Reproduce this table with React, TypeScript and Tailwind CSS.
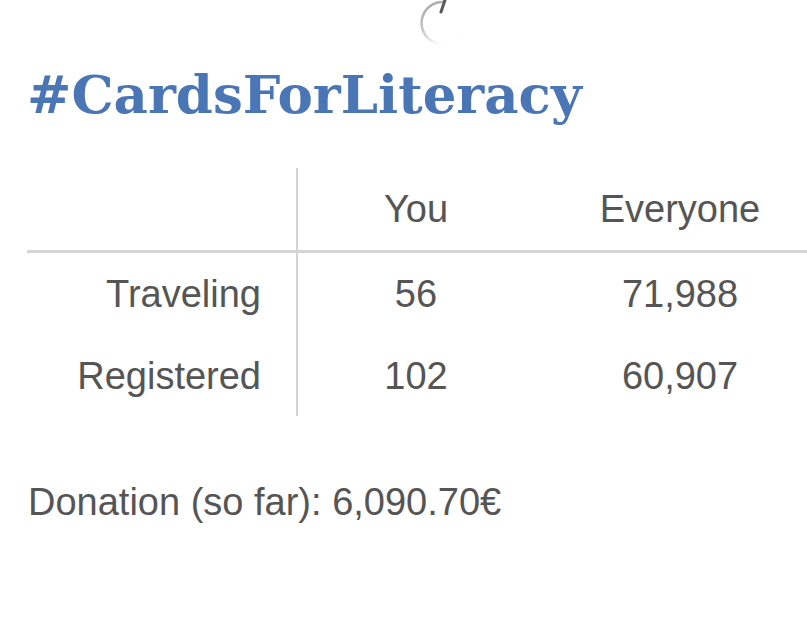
import React from "react";

export default function App() {
  const sans = { fontFamily: '"Liberation Sans", Arial, sans-serif' };
  return (
    <div className="w-[807px] h-[620px] bg-white overflow-hidden relative" style={sans}>
      <svg className="absolute left-[410px] top-[-7px]" width="60" height="60" viewBox="0 0 60 60">
        <defs>
          <linearGradient id="g" x1="0.2" y1="0" x2="0.8" y2="1">
            <stop offset="0" stopColor="#a8a8a8" />
            <stop offset="0.55" stopColor="#d2d2d2" />
            <stop offset="1" stopColor="#ffffff" stopOpacity="0" />
          </linearGradient>
        </defs>
        <path d="M34 9 A21 21 0 1 0 51 40" stroke="url(#g)" strokeWidth="2.5" fill="none" />
        <line x1="35" y1="7" x2="31" y2="19" stroke="#5a5a5a" strokeWidth="3" strokeLinecap="round" />
      </svg>
      <div className="pl-[27px] pt-[62px] h-[64px] box-content">
        <h1
          className="text-[53px] leading-[64px] font-bold text-[#4a76b6] whitespace-nowrap"
          style={{ fontFamily: '"DejaVu Serif", Georgia, serif' }}
        >
          #CardsForLiteracy
        </h1>
      </div>
      <div className="pl-[27px] pt-[42px] text-[38px] text-[#555]">
        <div className="flex h-[85px] border-b-[3px] border-[#d4d4d4] w-[780px]">
          <div className="w-[271px] shrink-0 border-r-2 border-[#d4d4d4]" />
          <div className="w-[236px] shrink-0 flex items-center justify-center">You</div>
          <div className="w-[292px] shrink-0 flex items-center justify-center">Everyone</div>
        </div>
        <div className="flex h-[83px]">
          <div className="w-[271px] shrink-0 border-r-2 border-[#d4d4d4] flex items-center justify-end pr-[35px]">Traveling</div>
          <div className="w-[236px] shrink-0 flex items-center justify-center">56</div>
          <div className="w-[292px] shrink-0 flex items-center justify-center">71,988</div>
        </div>
        <div className="flex h-[80px]">
          <div className="w-[271px] shrink-0 border-r-2 border-[#d4d4d4] flex items-center justify-end pr-[35px]">Registered</div>
          <div className="w-[236px] shrink-0 flex items-center justify-center">102</div>
          <div className="w-[292px] shrink-0 flex items-center justify-center">60,907</div>
        </div>
        <div className="pl-px pt-[61px] leading-[50px]">Donation (so far): 6,090.70€</div>
      </div>
    </div>
  );
}
